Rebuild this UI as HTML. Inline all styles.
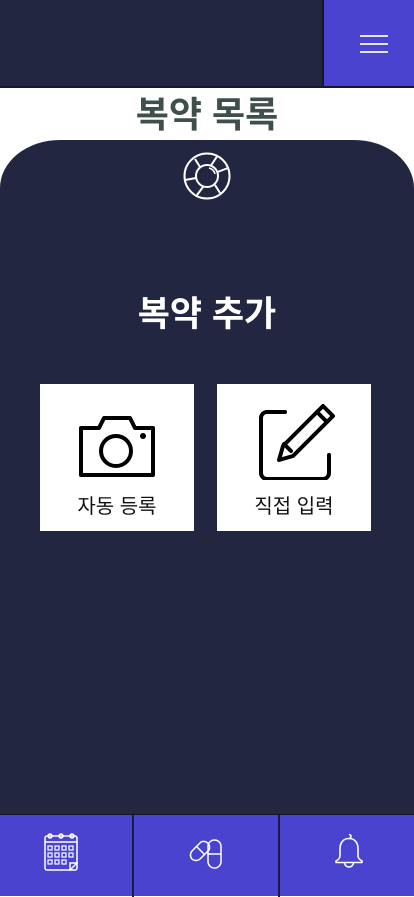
<!DOCTYPE html>
<html><head><meta charset="utf-8"><style>
*{margin:0;padding:0;box-sizing:border-box}
body{width:414px;height:896px;overflow:hidden;background:#fff;font-family:"Liberation Sans","Noto Sans CJK KR",sans-serif;position:relative}
.hdr{position:absolute;left:0;top:0;width:414px;height:88px;background:#232640;border-bottom:2px solid #15172a}
.menu{position:absolute;left:322px;top:0;width:92px;height:86px;background:#4a43cf;border-left:2px solid #15172a}
.menu i{position:absolute;left:36px;width:28px;height:2px;background:#e8e6ff}
.title{position:absolute;top:92px;left:0;width:414px;text-align:center;font-size:36px;font-weight:bold;color:#3f504c;line-height:46px}
.panel{position:absolute;left:0;top:140px;width:414px;height:680px;background:#232640;border-radius:60px 60px 0 0/48px 48px 0 0}
.h2{position:absolute;top:292px;left:0;width:414px;text-align:center;color:#fff;font-size:35px;font-weight:bold;line-height:46px}
.card{position:absolute;top:384px;width:154px;height:147px;background:#fff}
.card span{position:absolute;top:106px;left:0;width:100%;text-align:center;font-size:20px;color:#111}
.card svg{position:absolute}
.nav{position:absolute;left:0;top:814px;width:414px;height:82px;background:#4a43cf;border-top:1px solid #15172a}
.sep{position:absolute;top:0;width:2px;height:82px;background:#1c1a4a}
.nav svg{position:absolute}
</style></head><body>
<div class="hdr"></div>
<div class="menu"><i style="top:35px"></i><i style="top:43px"></i><i style="top:51px"></i></div>
<div class="title">복약 목록</div>
<div class="panel"></div>
<svg style="position:absolute;left:183px;top:152px" width="48" height="48" viewBox="0 0 48 48" fill="none" stroke="#fff" stroke-width="2"><circle cx="24" cy="24" r="22.5"/><circle cx="24" cy="24" r="11"/><path d="M28 13.5l6-9M34.5 20l10.5-4M32 33l5 8M20 35l-6 8M13 26l-11 2M17 15l-5-8"/><path d="M26 16a8 8 0 0 1 6 6" stroke-width="1.5"/></svg>
<div class="h2">복약 추가</div>
<div class="card" style="left:40px">
<svg style="left:38px;top:30px" width="78" height="64" viewBox="0 0 78 64" fill="none" stroke="#000" stroke-width="4" stroke-linejoin="round"><path d="M3 14h18l5-10h26l5 10h18v47H3z"/><circle cx="38" cy="37" r="15"/><circle cx="65" cy="22" r="3" fill="#000" stroke="none"/></svg>
<span>자동 등록</span></div>
<div class="card" style="left:217px">
<svg style="left:40px;top:16px" width="80" height="80" viewBox="0 0 80 80" fill="none" stroke="#000" stroke-width="4" stroke-linecap="round" stroke-linejoin="round"><path d="M28 12H10a6 6 0 0 0-6 6v55a6 6 0 0 0 6 6h56a6 6 0 0 0 6-6V55"/><path d="M66 6l10 10-40 40-14 4 4-14z"/><path d="M60 12l10 10M27 44l7 7"/></svg>
<span>직접 입력</span></div>
<div class="nav">
<div class="sep" style="left:132px"></div><div class="sep" style="left:278px"></div>
<svg style="left:44px;top:18px" width="34" height="38" viewBox="0 0 34 38" fill="none" stroke="#fff" stroke-width="1.5"><rect x="1" y="3" width="32" height="34" rx="2"/><path d="M1 9h32"/><circle cx="6" cy="3" r="2"/><circle cx="17" cy="3" r="2"/><circle cx="28" cy="3" r="2"/><g stroke-width="1.2"><rect x="4" y="13" width="4" height="4"/><rect x="11" y="13" width="4" height="4"/><rect x="18" y="13" width="4" height="4"/><rect x="25" y="13" width="4" height="4"/><rect x="4" y="20" width="4" height="4"/><rect x="11" y="20" width="4" height="4"/><rect x="18" y="20" width="4" height="4"/><rect x="25" y="20" width="4" height="4"/><rect x="4" y="27" width="4" height="4"/><rect x="11" y="27" width="4" height="4"/><rect x="18" y="27" width="4" height="4"/></g><path d="M26 37l7-7h-7z"/></svg>
<svg style="left:188px;top:20px" width="36" height="34" viewBox="0 0 36 34" fill="none" stroke="#fff" stroke-width="1.5"><path d="M4 24a6 6 0 0 1 0-8l9-9a6 6 0 0 1 8 8l-9 9a6 6 0 0 1-8 0z"/><path d="M8 11l9 9"/><rect x="20" y="5" width="13" height="28" rx="6.5"/><path d="M20 19h13"/></svg>
<svg style="left:334px;top:18px" width="30" height="36" viewBox="0 0 30 36" fill="none" stroke="#fff" stroke-width="1.6" stroke-linejoin="round"><path d="M15 1.5a2 2 0 0 1 0 4"/><path d="M15 5.5c-6 0-9 4.5-9 10.5v7c0 2-2 4-4 5v1.5h26V28c-2-1-4-3-4-5v-7c0-6-3-10.5-9-10.5z"/><path d="M10.5 29.5a4.5 4.5 0 0 0 9 0"/></svg>
</div>
</body></html>
